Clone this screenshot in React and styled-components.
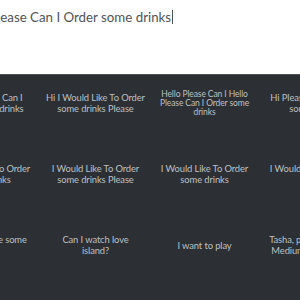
import styled, { createGlobalStyle } from "styled-components"

const GlobalStyle = createGlobalStyle`
    html, body {
        margin: 0;
        padding: 0;
        background: #ffffff;
        overflow: hidden;
    }
`

// each phrase is stored with the line breaks the board shows
const phrases = [
    { lines: ["Hello Please Can I", "Order some drinks"] },
    { lines: ["Hi I Would Like To Order", "some drinks Please"] },
    { lines: ["Hello Please Can I Hello", "Please Can I Order some", "drinks"], small: true },
    { lines: ["Hi Please Can I Order", "some drinks"] },
    { lines: ["I Would Like To Order", "some drinks"] },
    { lines: ["I Would Like To Order", "some drinks Please"] },
    { lines: ["I Would Like To Order", "some drinks"] },
    { lines: ["I Would Like To Order", "drinks"] },
    { lines: ["Hi I would like some", "water"] },
    { lines: ["Can I watch love", "island?"] },
    { lines: ["I want to play"] },
    { lines: ["Tasha, please can I get", "Medium Coke Please"] },
]

export default function App() {
    return (
        <>
            <GlobalStyle />
            <Page>
                <Header>
                    <Typed>
                        Hello Please Can I Order some drinks
                        <Caret />
                    </Typed>
                </Header>
                <Board>
                    <Grid>
                        {phrases.map((p, i) => (
                            <Cell key={i} $small={p.small}>
                                {p.lines.map((l, j) => <Line key={j}>{l}</Line>)}
                            </Cell>
                        ))}
                    </Grid>
                </Board>
            </Page>
        </>
    )
}

const Page = styled.div`
    width: 300px;
    height: 300px;
    display: flex;
    flex-direction: column;
    align-items: center;
    font-family: Lato, "Open Sans", sans-serif;
`
const Header = styled.div`
    width: 436px;
    height: 74px;
    flex-shrink: 0;
    box-sizing: border-box;
    padding: 9px 0 0 23px;
    background: #ffffff;
`
const Typed = styled.div`
    display: flex;
    align-items: center;
    font-size: 13.3px;
    color: #505457;
    white-space: nowrap;
    height: 16px;
`
const Caret = styled.span`
    display: inline-block;
    width: 1px;
    height: 14px;
    margin-left: 1px;
    background: #505457;
`
const Board = styled.div`
    flex: 1;
    width: 100%;
    display: flex;
    flex-direction: column;
    align-items: center;
    background: #2c2f33;
    border-top: 1px solid #4d5054;
`
const Grid = styled.div`
    display: grid;
    grid-template-columns: repeat(4, 109px);
    grid-auto-rows: 56px;
    row-gap: 15px;
`
const Cell = styled.div`
    display: flex;
    flex-direction: column;
    align-items: center;
    justify-content: center;
    text-align: center;
    color: #bcc0c4;
    font-size: ${props => props.$small ? "8.5px" : "9.4px"};
    line-height: ${props => props.$small ? "9px" : "11px"};
    letter-spacing: -0.1px;
`
const Line = styled.span`
    white-space: nowrap;
`
